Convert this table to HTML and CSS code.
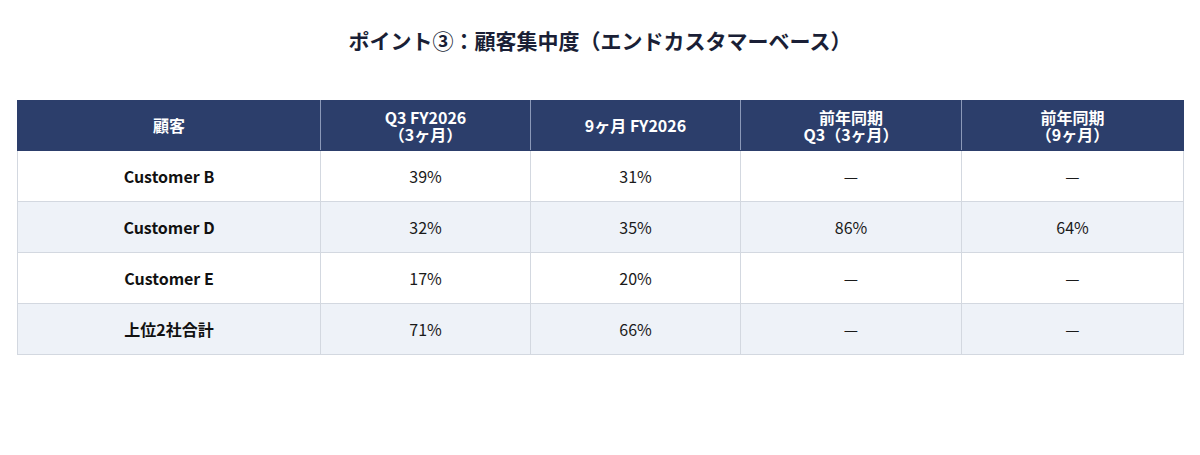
FILE: index.html
```html
<!DOCTYPE html>
<html lang="ja">
<head>
<meta charset="utf-8">
<link rel="stylesheet" href="styles.css">
</head>
<body>
<div class="page">
  <h1 class="title">ポイント③：顧客集中度（エンドカスタマーベース）</h1>
  <table class="grid">
    <colgroup>
      <col class="c1"><col class="c2"><col class="c3"><col class="c4"><col class="c5">
    </colgroup>
    <thead>
      <tr>
        <th>顧客</th>
        <th>Q3 FY2026<br>（3ヶ月）</th>
        <th>9ヶ月 FY2026</th>
        <th>前年同期<br>Q3（3ヶ月）</th>
        <th>前年同期<br>（9ヶ月）</th>
      </tr>
    </thead>
    <tbody>
      <tr><td class="name">Customer B</td><td>39%</td><td>31%</td><td>—</td><td>—</td></tr>
      <tr class="alt"><td class="name">Customer D</td><td>32%</td><td>35%</td><td>86%</td><td>64%</td></tr>
      <tr><td class="name">Customer E</td><td>17%</td><td>20%</td><td>—</td><td>—</td></tr>
      <tr class="alt"><td class="name">上位2社合計</td><td>71%</td><td>66%</td><td>—</td><td>—</td></tr>
    </tbody>
  </table>
</div>
</body>
</html>
```
FILE: styles.css
```css
html, body {
  margin: 0;
  padding: 0;
  background: #ffffff;
}
body {
  font-family: "Noto Sans CJK JP", "Noto Sans", sans-serif;
  color: #111111;
}
.page {
  padding: 27px 17px 0 17px;
}
.title {
  margin: 0 0 47px 0;
  text-align: center;
  font-size: 21px;
  line-height: 26px;
  font-weight: 700;
  color: #1a1f36;
}
.grid {
  width: 100%;
  border-collapse: collapse;
  table-layout: fixed;
  font-size: 16px;
}
.c1 { width: 303px; }
.c2 { width: 210px; }
.c3 { width: 210px; }
.c4 { width: 221px; }
.c5 { width: 222px; }
.grid th {
  background: #2c3e6b;
  color: #ffffff;
  font-size: 16px;
  line-height: 17px;
  font-weight: 700;
  height: 50px;
  padding: 0 8px;
  box-sizing: border-box;
  border: 1px solid #2c3e6b;
  border-left-color: #8b98b8;
  border-right-color: #8b98b8;
  text-align: center;
  vertical-align: middle;
}
.grid th:first-child { border-left-color: #2c3e6b; }
.grid th:last-child { border-right-color: #2c3e6b; }
.grid td {
  height: 51px;
  box-sizing: border-box;
  padding: 0 8px;
  border: 1px solid #d3d8e0;
  text-align: center;
  vertical-align: middle;
  color: #1a1a1a;
  line-height: 20px;
}
.grid td.name {
  font-weight: 700;
  color: #111111;
}
.grid tr.alt td {
  background: #eef2f8;
}
```
